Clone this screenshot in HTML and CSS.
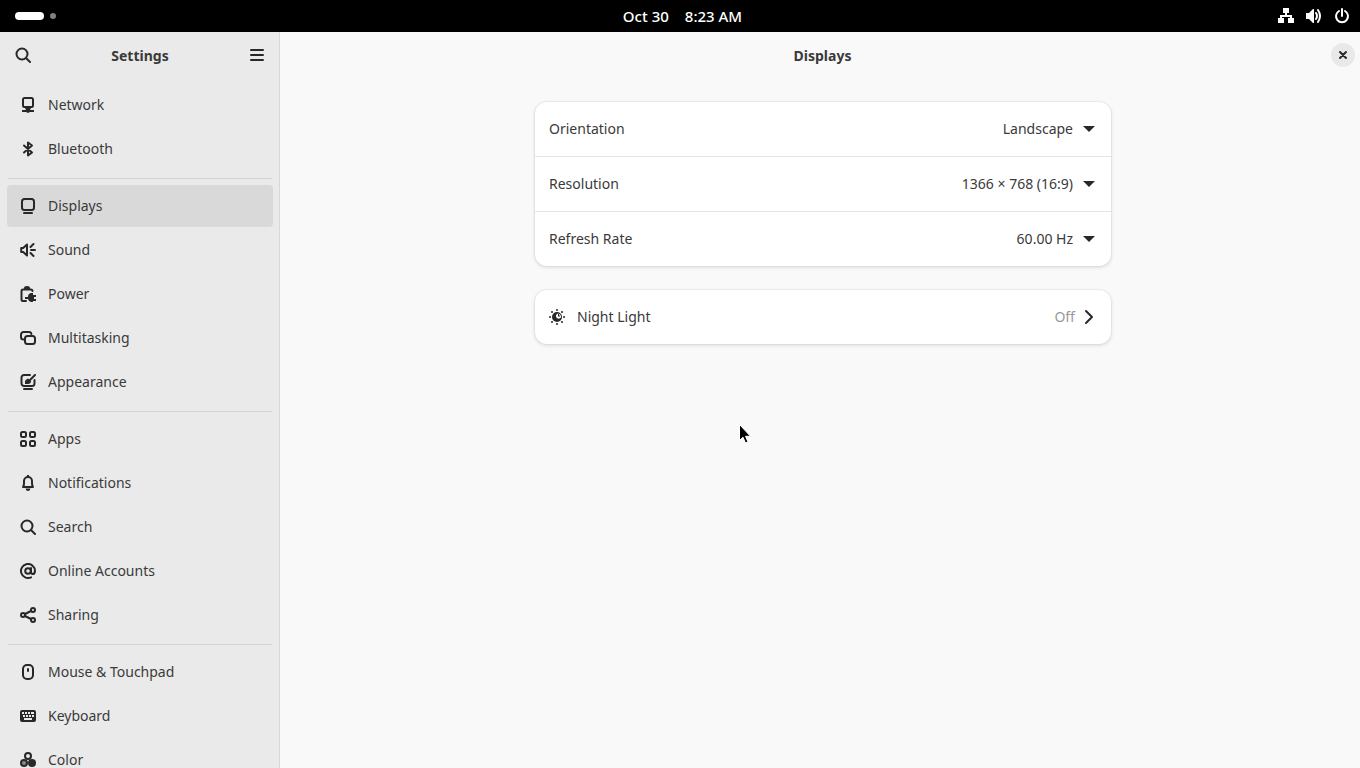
FILE: index.html
```html
<!DOCTYPE html>
<html lang="en">
<head>
  <meta charset="UTF-8" />
  <meta name="viewport" content="width=device-width, initial-scale=1.0" />
  <title>Settings - Displays</title>
  <link rel="stylesheet" href="styles.css">
</head>
<body>
  <header class="topbar">
    <button class="workspaces" aria-label="Activities"><span class="pill"></span><span class="dot"></span></button>
    <button class="clock"><span>Oct 30</span><span>8:23 AM</span></button>
    <button class="system" aria-label="System menu">
      <svg class="icon" viewBox="0 0 16 16"><path class="fill" d="M5 0h6v5H9v2h5v3h2v5h-6v-5h2V9H4v1h2v5H0v-5h2V7h5V5H5z"/></svg>
      <svg class="icon" viewBox="0 0 16 16"><path class="fill" d="M0 5h3l4-4h1v14H7l-4-4H0z"/><path class="line" d="M10 5q2 3 0 6M12 2q4 6 0 12"/></svg>
      <svg class="icon" viewBox="0 0 16 16"><path class="line" d="M8 1v7M5 3a6 6 0 1 0 6 0"/></svg>
    </button>
  </header>

  <div class="window">
    <aside class="sidebar">
      <div class="sidebar-header">
        <button class="flat" aria-label="Search"><svg class="icon" viewBox="0 0 16 16"><circle class="line" cx="7" cy="7" r="5.5"/><path class="line" d="m11 11 4 4"/></svg></button>
        <h2>Settings</h2>
        <button class="flat" aria-label="Main menu"><svg class="icon" viewBox="0 0 16 16"><path class="line" d="M2 3h12M2 8h12M2 13h12"/></svg></button>
      </div>

      <nav class="panels">
        <a class="panel" href="#network"><svg class="icon" viewBox="0 0 16 16"><rect class="line" x="3" y="1" width="10" height="9" rx="1.5"/><path class="fill" d="M4 9h8l-2 4H6zM2 13h4l2-1 2 1h4v2h-4l-2 1-2-1H2z"/></svg>Network</a>
        <a class="panel" href="#bluetooth"><svg class="icon" viewBox="0 0 16 16"><path class="line" d="m4 4.500 8 7L8 14.500v-13l4 3-8 7"/></svg>Bluetooth</a>
        <hr>
        <a class="panel active" href="#displays" aria-current="page"><svg class="icon" viewBox="0 0 16 16"><rect class="line" x="2" y="1" width="12" height="11" rx="2.5"/><path class="line" d="M4 15h8"/></svg>Displays</a>
        <a class="panel" href="#sound"><svg class="icon" viewBox="0 0 16 16"><path class="line" d="M1.200 6v4h2L7 13.500v-11L3.200 6z"/><path class="line" d="M11 8h4M10.500 5l3-3M10.500 11l3 3"/></svg>Sound</a>
        <a class="panel" href="#power"><svg class="icon" viewBox="0 0 16 16"><path class="line" d="M6 15H3a1.500 1.500 0 0 1-1.500-1.500V5A1.500 1.500 0 0 1 3 3.500h8A1.500 1.500 0 0 1 12.500 5"/><path class="fill" d="M4 2q0-2 3-2t3 2v1H4zM11 7h2v2h3v2h-2v2h2v2h-3v1h-2a4 4 0 0 1-3-3H5v-2h3a4 4 0 0 1 3-4z"/></svg>Power</a>
        <a class="panel" href="#multitasking"><svg class="icon" viewBox="0 0 16 16"><path class="line" d="M3.500 9.500A2.500 2.500 0 0 1 1 7V4.500A2.500 2.500 0 0 1 3.500 2H9a2.500 2.500 0 0 1 2.400 2"/><rect class="line" x="5" y="6" width="10" height="8" rx="2.5"/></svg>Multitasking</a>
        <a class="panel" href="#appearance"><svg class="icon" viewBox="0 0 16 16"><path class="line" d="M10 1H4a2.500 2.500 0 0 0-2.500 2.500v6A2.500 2.500 0 0 0 4 12h8a2.500 2.500 0 0 0 2.500-2.500V6M4 15h8"/><path class="line" d="M10 6l5-5"/><path class="fill" d="M5 10V7q1-2 3-2.500L11 7q0 3-3 3z"/></svg>Appearance</a>
        <hr>
        <a class="panel" href="#apps"><svg class="icon" viewBox="0 0 16 16"><rect class="line" x="1" y="1" width="5" height="5" rx="1.5"/><rect class="line" x="10" y="1" width="5" height="5" rx="1.5"/><rect class="line" x="1" y="10" width="5" height="5" rx="1.5"/><rect class="line" x="10" y="10" width="5" height="5" rx="1.5"/></svg>Apps</a>
        <a class="panel" href="#notifications"><svg class="icon" viewBox="0 0 16 16"><path class="line" d="M3 12h10q-1-1.500-1-3.500V6a4 4 0 0 0-8 0v2.500Q4 10.500 3 12z"/><path class="fill" d="M7 0h2v2H7zM5.500 13.500h5Q10 16 8 16t-2.500-2.500z"/></svg>Notifications</a>
        <a class="panel" href="#search"><svg class="icon" viewBox="0 0 16 16"><circle class="line" cx="7" cy="7" r="5.5"/><path class="line" d="m11 11 4 4"/></svg>Search</a>
        <a class="panel" href="#accounts"><svg class="icon" viewBox="0 0 16 16"><circle class="line" cx="8" cy="8" r="2.800"/><path class="line" d="M11 5v4q0 2 1.800 2T15 8a7 7 0 1 0-4 6.300"/></svg>Online Accounts</a>
        <a class="panel" href="#sharing"><svg class="icon" viewBox="0 0 16 16"><path class="line" d="m5 7 6-3M5 9l6 3"/><circle class="line" cx="3" cy="8" r="2"/><circle class="line" cx="13" cy="3" r="2"/><circle class="line" cx="13" cy="13" r="2"/></svg>Sharing</a>
        <hr>
        <a class="panel" href="#mouse"><svg class="icon" viewBox="0 0 16 16"><rect class="line" x="3" y="1" width="10" height="14" rx="4"/><path class="line" d="M8 5v2"/></svg>Mouse &amp; Touchpad</a>
        <a class="panel" href="#keyboard"><svg class="icon" viewBox="0 0 16 16"><path class="fill" fill-rule="evenodd" d="M2 2h12a2 2 0 0 1 2 2v8a2 2 0 0 1-2 2H2a2 2 0 0 1-2-2V4a2 2 0 0 1 2-2zM2 4v2h2V4zM5 4v2h2V4zM8 4v2h2V4zM11 4v2h3V4zM3 7v2h2V7zM6 7v2h2V7zM9 7v2h2V7zM12 7v2h2V7zM4 10v2h8v-2z"/></svg>Keyboard</a>
        <a class="panel" href="#color"><svg class="icon" viewBox="0 0 16 16"><circle class="line" cx="8" cy="4" r="3"/><circle class="line tint" cx="4" cy="11" r="3"/><circle class="fill" cx="12" cy="11" r="4"/></svg>Color</a>
      </nav>
    </aside>

    <main class="content">
      <div class="content-header">
        <h1>Displays</h1>
        <button class="close" aria-label="Close"><svg viewBox="0 0 10 10"><path class="line" d="m2 2 6 6M8 2 2 8"/></svg></button>
      </div>

      <div class="groups">
        <div class="card">
          <div class="row">
            <label for="orientation">Orientation</label>
            <select id="orientation"><option>Landscape</option></select>
            <svg class="arrow" viewBox="0 0 12 6"><path class="fill" d="M0 0h12L6 6z"/></svg>
          </div>
          <div class="row">
            <label for="resolution">Resolution</label>
            <select id="resolution"><option>1366 × 768 (16:9)</option></select>
            <svg class="arrow" viewBox="0 0 12 6"><path class="fill" d="M0 0h12L6 6z"/></svg>
          </div>
          <div class="row">
            <label for="refresh">Refresh Rate</label>
            <select id="refresh"><option>60.00 Hz</option></select>
            <svg class="arrow" viewBox="0 0 12 6"><path class="fill" d="M0 0h12L6 6z"/></svg>
          </div>
        </div>

        <div class="card">
          <button class="row night-light">
            <svg class="icon" viewBox="0 0 16 16"><path class="fill" fill-rule="evenodd" d="M8 3a5 5 0 1 1 0 10A5 5 0 0 1 8 3zm1 1.500a2.500 2.500 0 0 0-1 4.500q2 1.500 4-.500a3.800 3.800 0 0 0-3-4z"/><path class="fill" d="M9 5v2.500h2v-1H10V5z"/><g class="fill"><circle cx="8" cy="1" r="1"/><circle cx="8" cy="15" r="1"/><circle cx="1" cy="8" r="1"/><circle cx="15" cy="8" r="1"/><circle cx="3" cy="3" r="1"/><circle cx="13" cy="3" r="1"/><circle cx="3" cy="13" r="1"/><circle cx="13" cy="13" r="1"/></g></svg>
            <span class="name">Night Light</span>
            <span class="state">Off</span>
            <svg class="chevron" viewBox="0 0 12 16"><path class="line" d="m3 2 6 6-6 6"/></svg>
          </button>
        </div>
      </div>
    </main>
  </div>

  <svg class="cursor" viewBox="0 0 12 20"><path d="M.5.500v16l3.500-3.300 2.500 5.800 2.500-1-2.500-5.700h5z"/></svg>
</body>
</html>
```
FILE: styles.css
```css
* {
  box-sizing: border-box;
}
body {
  margin: 0;
  height: 100vh;
  display: flex;
  flex-direction: column;
  overflow: hidden;
  font-family: "Noto Sans", sans-serif;
  font-size: 14px;
  line-height: 22px;
  color: #3a3a3a;
  background: #f9f9f9;
}
button, select {
  font: inherit;
  color: inherit;
  border: none;
  padding: 0;
  background: none;
}
h1, h2 {
  margin: 0;
  padding-top: 1px;
  font-size: 14px;
  font-weight: 700;
}
svg {
  display: block;
  flex: none;
  color: #282828;
}
.icon {
  width: 16px;
  height: 16px;
}
.line {
  fill: none;
  stroke: currentColor;
  stroke-width: 2;
  stroke-linecap: round;
  stroke-linejoin: round;
}
.fill {
  fill: currentColor;
}
.tint {
  fill: #888;
}

/* top bar */
.topbar {
  flex: none;
  height: 32px;
  padding: 0 10px 0 15px;
  display: grid;
  grid-template-columns: 1fr auto 1fr;
  align-items: center;
  background: #000;
  color: #fff;
}
.workspaces {
  display: flex;
  align-items: center;
  gap: 6px;
}
.pill {
  width: 29px;
  height: 8px;
  border-radius: 4px;
  background: #fff;
}
.dot {
  width: 6px;
  height: 6px;
  border-radius: 50%;
  background: #808080;
}
.clock {
  display: flex;
  gap: 16px;
  font-size: 15px;
  font-weight: 500;
}
.system {
  justify-self: end;
  display: flex;
  gap: 12px;
}
.system .icon {
  color: #fff;
}

/* sidebar */
.window {
  flex: 1;
  min-height: 0;
  display: flex;
}
.sidebar {
  width: 280px;
  flex: none;
  overflow: hidden;
  background: #eaeaea;
  border-right: 1px solid #d8d8d8;
}
.sidebar-header {
  height: 46px;
  padding: 0 14px 0 15px;
  display: flex;
  align-items: center;
  justify-content: space-between;
}
.panels {
  padding: 6px 6px 6px 7px;
}
.panel {
  display: flex;
  align-items: center;
  gap: 12px;
  padding: 10px 13px;
  margin-bottom: 2px;
  border-radius: 4px;
  color: inherit;
  text-decoration: none;
}
.panel.active {
  background: #d9d9d9;
}
.panels hr {
  height: 1px;
  margin: 8px 1px 6px;
  border: none;
  background: #d3d3d3;
}

/* content */
.content {
  flex: 1;
  min-width: 0;
}
.content-header {
  height: 46px;
  padding: 0 5px 0 34px;
  display: flex;
  align-items: center;
}
.content-header h1 {
  flex: 1;
  text-align: center;
}
.close {
  width: 24px;
  height: 24px;
  display: grid;
  place-items: center;
  border-radius: 50%;
  background: #e9e9e9;
}
.close svg {
  width: 10px;
  height: 10px;
}
.groups {
  padding: 24px 12px 24px 18px;
  display: flex;
  flex-direction: column;
  align-items: center;
  gap: 24px;
}
.card {
  width: 100%;
  max-width: 576px;
  border-radius: 12px;
  background: #fff;
  box-shadow: 0 0 0 1px rgba(0, 0, 0, 0.03), 0 1px 3px 1px rgba(0, 0, 0, 0.07), 0 2px 6px rgba(0, 0, 0, 0.03);
}
.row {
  width: 100%;
  padding: 16px 16px 16px 14px;
  display: flex;
  align-items: center;
}
.row + .row {
  border-top: 1px solid #e4e4e4;
}
.row select {
  flex: 1;
  appearance: none;
  text-align-last: right;
}
.arrow {
  width: 12px;
  height: 6px;
  margin-left: 10px;
}
.night-light {
  gap: 12px;
}
.night-light .name {
  flex: 1;
  text-align: left;
}
.state {
  color: #999;
}
.chevron {
  width: 12px;
  height: 16px;
  margin-left: -4px;
}

.cursor {
  position: absolute;
  left: 739px;
  top: 424px;
  width: 12px;
  height: 20px;
  fill: #000;
  stroke: #fff;
  stroke-width: 1;
}
```
